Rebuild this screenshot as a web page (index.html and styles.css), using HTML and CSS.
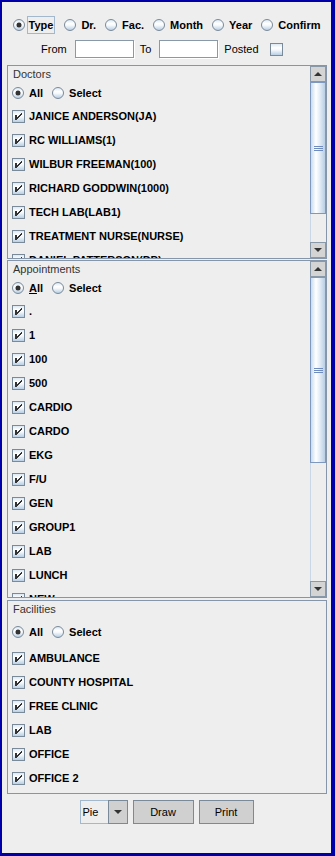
FILE: index.html
```html
<!DOCTYPE html>
<html>

<head>
    <meta charset="utf-8" />
    <title>Appointments chart</title>
    <link rel="stylesheet" href="styles.css">
</head>

<body>
    <div class="window">
        <div class="mode-row">
            <div class="opt"><span class="radio on"></span><span class="focus">Type</span></div>
            <div class="opt"><span class="radio"></span>Dr.</div>
            <div class="opt"><span class="radio"></span>Fac.</div>
            <div class="opt"><span class="radio"></span>Month</div>
            <div class="opt"><span class="radio"></span>Year</div>
            <div class="opt"><span class="radio"></span>Confirm</div>
        </div>

        <div class="range-row">
            <span class="lbl">From</span>
            <span class="field"></span>
            <span class="lbl to-lbl">To</span>
            <span class="field"></span>
            <span class="lbl">Posted</span>
            <span class="check posted-check"></span>
        </div>

        <div class="panel doctors">
            <div class="viewport">
                <div class="panel-title">Doctors</div>
                <div class="choice">
                    <div class="opt"><span class="radio on"></span>All</div>
                    <div class="opt"><span class="radio"></span>Select</div>
                </div>
                <div class="item"><span class="check"><svg width="11" height="11" viewBox="0 0 11 11" shape-rendering="crispEdges"><rect x="2" y="4" width="2" height="5"/><rect x="8" y="2" width="1" height="2"/><rect x="7" y="3" width="1" height="2"/><rect x="6" y="4" width="1" height="2"/><rect x="5" y="5" width="1" height="2"/><rect x="4" y="6" width="1" height="2"/></svg></span>JANICE ANDERSON(JA)</div>
                <div class="item"><span class="check"><svg width="11" height="11" viewBox="0 0 11 11" shape-rendering="crispEdges"><rect x="2" y="4" width="2" height="5"/><rect x="8" y="2" width="1" height="2"/><rect x="7" y="3" width="1" height="2"/><rect x="6" y="4" width="1" height="2"/><rect x="5" y="5" width="1" height="2"/><rect x="4" y="6" width="1" height="2"/></svg></span>RC WILLIAMS(1)</div>
                <div class="item"><span class="check"><svg width="11" height="11" viewBox="0 0 11 11" shape-rendering="crispEdges"><rect x="2" y="4" width="2" height="5"/><rect x="8" y="2" width="1" height="2"/><rect x="7" y="3" width="1" height="2"/><rect x="6" y="4" width="1" height="2"/><rect x="5" y="5" width="1" height="2"/><rect x="4" y="6" width="1" height="2"/></svg></span>WILBUR FREEMAN(100)</div>
                <div class="item"><span class="check"><svg width="11" height="11" viewBox="0 0 11 11" shape-rendering="crispEdges"><rect x="2" y="4" width="2" height="5"/><rect x="8" y="2" width="1" height="2"/><rect x="7" y="3" width="1" height="2"/><rect x="6" y="4" width="1" height="2"/><rect x="5" y="5" width="1" height="2"/><rect x="4" y="6" width="1" height="2"/></svg></span>RICHARD GODDWIN(1000)</div>
                <div class="item"><span class="check"><svg width="11" height="11" viewBox="0 0 11 11" shape-rendering="crispEdges"><rect x="2" y="4" width="2" height="5"/><rect x="8" y="2" width="1" height="2"/><rect x="7" y="3" width="1" height="2"/><rect x="6" y="4" width="1" height="2"/><rect x="5" y="5" width="1" height="2"/><rect x="4" y="6" width="1" height="2"/></svg></span>TECH LAB(LAB1)</div>
                <div class="item"><span class="check"><svg width="11" height="11" viewBox="0 0 11 11" shape-rendering="crispEdges"><rect x="2" y="4" width="2" height="5"/><rect x="8" y="2" width="1" height="2"/><rect x="7" y="3" width="1" height="2"/><rect x="6" y="4" width="1" height="2"/><rect x="5" y="5" width="1" height="2"/><rect x="4" y="6" width="1" height="2"/></svg></span>TREATMENT NURSE(NURSE)</div>
                <div class="item"><span class="check"><svg width="11" height="11" viewBox="0 0 11 11" shape-rendering="crispEdges"><rect x="2" y="4" width="2" height="5"/><rect x="8" y="2" width="1" height="2"/><rect x="7" y="3" width="1" height="2"/><rect x="6" y="4" width="1" height="2"/><rect x="5" y="5" width="1" height="2"/><rect x="4" y="6" width="1" height="2"/></svg></span>DANIEL PATTERSON(DP)</div>
            </div>
            <div class="scrollbar">
                <div class="arrow-btn"><span class="tri-up"></span></div>
                <div class="track"><div class="thumb"><span class="grip"></span></div></div>
                <div class="arrow-btn"><span class="tri-down"></span></div>
            </div>
        </div>

        <div class="panel appointments">
            <div class="viewport">
                <div class="panel-title">Appointments</div>
                <div class="choice">
                    <div class="opt"><span class="radio on"></span><u>A</u>ll</div>
                    <div class="opt"><span class="radio"></span>Select</div>
                </div>
                <div class="item"><span class="check"><svg width="11" height="11" viewBox="0 0 11 11" shape-rendering="crispEdges"><rect x="2" y="4" width="2" height="5"/><rect x="8" y="2" width="1" height="2"/><rect x="7" y="3" width="1" height="2"/><rect x="6" y="4" width="1" height="2"/><rect x="5" y="5" width="1" height="2"/><rect x="4" y="6" width="1" height="2"/></svg></span>.</div>
                <div class="item"><span class="check"><svg width="11" height="11" viewBox="0 0 11 11" shape-rendering="crispEdges"><rect x="2" y="4" width="2" height="5"/><rect x="8" y="2" width="1" height="2"/><rect x="7" y="3" width="1" height="2"/><rect x="6" y="4" width="1" height="2"/><rect x="5" y="5" width="1" height="2"/><rect x="4" y="6" width="1" height="2"/></svg></span>1</div>
                <div class="item"><span class="check"><svg width="11" height="11" viewBox="0 0 11 11" shape-rendering="crispEdges"><rect x="2" y="4" width="2" height="5"/><rect x="8" y="2" width="1" height="2"/><rect x="7" y="3" width="1" height="2"/><rect x="6" y="4" width="1" height="2"/><rect x="5" y="5" width="1" height="2"/><rect x="4" y="6" width="1" height="2"/></svg></span>100</div>
                <div class="item"><span class="check"><svg width="11" height="11" viewBox="0 0 11 11" shape-rendering="crispEdges"><rect x="2" y="4" width="2" height="5"/><rect x="8" y="2" width="1" height="2"/><rect x="7" y="3" width="1" height="2"/><rect x="6" y="4" width="1" height="2"/><rect x="5" y="5" width="1" height="2"/><rect x="4" y="6" width="1" height="2"/></svg></span>500</div>
                <div class="item"><span class="check"><svg width="11" height="11" viewBox="0 0 11 11" shape-rendering="crispEdges"><rect x="2" y="4" width="2" height="5"/><rect x="8" y="2" width="1" height="2"/><rect x="7" y="3" width="1" height="2"/><rect x="6" y="4" width="1" height="2"/><rect x="5" y="5" width="1" height="2"/><rect x="4" y="6" width="1" height="2"/></svg></span>CARDIO</div>
                <div class="item"><span class="check"><svg width="11" height="11" viewBox="0 0 11 11" shape-rendering="crispEdges"><rect x="2" y="4" width="2" height="5"/><rect x="8" y="2" width="1" height="2"/><rect x="7" y="3" width="1" height="2"/><rect x="6" y="4" width="1" height="2"/><rect x="5" y="5" width="1" height="2"/><rect x="4" y="6" width="1" height="2"/></svg></span>CARDO</div>
                <div class="item"><span class="check"><svg width="11" height="11" viewBox="0 0 11 11" shape-rendering="crispEdges"><rect x="2" y="4" width="2" height="5"/><rect x="8" y="2" width="1" height="2"/><rect x="7" y="3" width="1" height="2"/><rect x="6" y="4" width="1" height="2"/><rect x="5" y="5" width="1" height="2"/><rect x="4" y="6" width="1" height="2"/></svg></span>EKG</div>
                <div class="item"><span class="check"><svg width="11" height="11" viewBox="0 0 11 11" shape-rendering="crispEdges"><rect x="2" y="4" width="2" height="5"/><rect x="8" y="2" width="1" height="2"/><rect x="7" y="3" width="1" height="2"/><rect x="6" y="4" width="1" height="2"/><rect x="5" y="5" width="1" height="2"/><rect x="4" y="6" width="1" height="2"/></svg></span>F/U</div>
                <div class="item"><span class="check"><svg width="11" height="11" viewBox="0 0 11 11" shape-rendering="crispEdges"><rect x="2" y="4" width="2" height="5"/><rect x="8" y="2" width="1" height="2"/><rect x="7" y="3" width="1" height="2"/><rect x="6" y="4" width="1" height="2"/><rect x="5" y="5" width="1" height="2"/><rect x="4" y="6" width="1" height="2"/></svg></span>GEN</div>
                <div class="item"><span class="check"><svg width="11" height="11" viewBox="0 0 11 11" shape-rendering="crispEdges"><rect x="2" y="4" width="2" height="5"/><rect x="8" y="2" width="1" height="2"/><rect x="7" y="3" width="1" height="2"/><rect x="6" y="4" width="1" height="2"/><rect x="5" y="5" width="1" height="2"/><rect x="4" y="6" width="1" height="2"/></svg></span>GROUP1</div>
                <div class="item"><span class="check"><svg width="11" height="11" viewBox="0 0 11 11" shape-rendering="crispEdges"><rect x="2" y="4" width="2" height="5"/><rect x="8" y="2" width="1" height="2"/><rect x="7" y="3" width="1" height="2"/><rect x="6" y="4" width="1" height="2"/><rect x="5" y="5" width="1" height="2"/><rect x="4" y="6" width="1" height="2"/></svg></span>LAB</div>
                <div class="item"><span class="check"><svg width="11" height="11" viewBox="0 0 11 11" shape-rendering="crispEdges"><rect x="2" y="4" width="2" height="5"/><rect x="8" y="2" width="1" height="2"/><rect x="7" y="3" width="1" height="2"/><rect x="6" y="4" width="1" height="2"/><rect x="5" y="5" width="1" height="2"/><rect x="4" y="6" width="1" height="2"/></svg></span>LUNCH</div>
                <div class="item"><span class="check"><svg width="11" height="11" viewBox="0 0 11 11" shape-rendering="crispEdges"><rect x="2" y="4" width="2" height="5"/><rect x="8" y="2" width="1" height="2"/><rect x="7" y="3" width="1" height="2"/><rect x="6" y="4" width="1" height="2"/><rect x="5" y="5" width="1" height="2"/><rect x="4" y="6" width="1" height="2"/></svg></span>NEW</div>
            </div>
            <div class="scrollbar">
                <div class="arrow-btn"><span class="tri-up"></span></div>
                <div class="track"><div class="thumb"><span class="grip"></span></div></div>
                <div class="arrow-btn"><span class="tri-down"></span></div>
            </div>
        </div>

        <div class="panel facilities">
            <div class="viewport">
                <div class="panel-title">Facilities</div>
                <div class="choice">
                    <div class="opt"><span class="radio on"></span>All</div>
                    <div class="opt"><span class="radio"></span>Select</div>
                </div>
                <div class="item"><span class="check"><svg width="11" height="11" viewBox="0 0 11 11" shape-rendering="crispEdges"><rect x="2" y="4" width="2" height="5"/><rect x="8" y="2" width="1" height="2"/><rect x="7" y="3" width="1" height="2"/><rect x="6" y="4" width="1" height="2"/><rect x="5" y="5" width="1" height="2"/><rect x="4" y="6" width="1" height="2"/></svg></span>AMBULANCE</div>
                <div class="item"><span class="check"><svg width="11" height="11" viewBox="0 0 11 11" shape-rendering="crispEdges"><rect x="2" y="4" width="2" height="5"/><rect x="8" y="2" width="1" height="2"/><rect x="7" y="3" width="1" height="2"/><rect x="6" y="4" width="1" height="2"/><rect x="5" y="5" width="1" height="2"/><rect x="4" y="6" width="1" height="2"/></svg></span>COUNTY HOSPITAL</div>
                <div class="item"><span class="check"><svg width="11" height="11" viewBox="0 0 11 11" shape-rendering="crispEdges"><rect x="2" y="4" width="2" height="5"/><rect x="8" y="2" width="1" height="2"/><rect x="7" y="3" width="1" height="2"/><rect x="6" y="4" width="1" height="2"/><rect x="5" y="5" width="1" height="2"/><rect x="4" y="6" width="1" height="2"/></svg></span>FREE CLINIC</div>
                <div class="item"><span class="check"><svg width="11" height="11" viewBox="0 0 11 11" shape-rendering="crispEdges"><rect x="2" y="4" width="2" height="5"/><rect x="8" y="2" width="1" height="2"/><rect x="7" y="3" width="1" height="2"/><rect x="6" y="4" width="1" height="2"/><rect x="5" y="5" width="1" height="2"/><rect x="4" y="6" width="1" height="2"/></svg></span>LAB</div>
                <div class="item"><span class="check"><svg width="11" height="11" viewBox="0 0 11 11" shape-rendering="crispEdges"><rect x="2" y="4" width="2" height="5"/><rect x="8" y="2" width="1" height="2"/><rect x="7" y="3" width="1" height="2"/><rect x="6" y="4" width="1" height="2"/><rect x="5" y="5" width="1" height="2"/><rect x="4" y="6" width="1" height="2"/></svg></span>OFFICE</div>
                <div class="item"><span class="check"><svg width="11" height="11" viewBox="0 0 11 11" shape-rendering="crispEdges"><rect x="2" y="4" width="2" height="5"/><rect x="8" y="2" width="1" height="2"/><rect x="7" y="3" width="1" height="2"/><rect x="6" y="4" width="1" height="2"/><rect x="5" y="5" width="1" height="2"/><rect x="4" y="6" width="1" height="2"/></svg></span>OFFICE 2</div>
            </div>
        </div>

        <div class="button-row">
            <div class="combo">
                <span class="combo-value">Pie</span>
                <span class="combo-arrow"><span class="tri-down"></span></span>
            </div>
            <div class="btn draw-btn">Draw</div>
            <div class="btn print-btn">Print</div>
        </div>
    </div>
</body>

</html>
```

FILE: styles.css
```css
* {
    box-sizing: border-box;
}

body {
    margin: 0;
    background: #0000a8;
    font-family: "Liberation Sans", Arial, sans-serif;
    font-size: 11px;
    color: #000;
}

.window {
    width: 335px;
    height: 856px;
    border-style: solid;
    border-color: #0000a8;
    border-width: 2px 4px 3px 2px;
    background: #eeeeee;
    padding-top: 14px;
}

/* radio buttons and checkboxes, metal style */
.radio {
    flex: none;
    position: relative;
    width: 12px;
    height: 12px;
    margin-right: 5px;
    border: 1px solid #7a8a99;
    border-radius: 50%;
    background: linear-gradient(#dde8f3 0%, #ffffff 35%, #f4f8fb 55%, #b8cfe5 100%);
}

.radio.on::after {
    content: "";
    position: absolute;
    left: 3px;
    top: 3px;
    width: 4px;
    height: 4px;
    border-radius: 50%;
    background: #333;
    box-shadow: 0 0 0 0.5px #333;
}

.check {
    flex: none;
    width: 13px;
    height: 13px;
    margin-right: 4px;
    border: 1px solid #7a8a99;
    background: linear-gradient(#dde8f3 0%, #ffffff 35%, #f4f8fb 55%, #b8cfe5 100%);
}

.check svg {
    display: block;
    fill: #333;
}

.opt {
    display: flex;
    align-items: center;
    font-weight: bold;
    white-space: nowrap;
}

/* top rows */
.mode-row {
    height: 18px;
    display: flex;
    align-items: center;
    justify-content: center;
    gap: 9px;
}

.mode-row .radio.on {
    margin-right: 2px;
}

.focus {
    height: 18px;
    line-height: 16px;
    padding: 0 1px;
    border: 1px solid #a3b8cc;
}

.range-row {
    height: 18px;
    margin-top: 6px;
    padding-left: 39px;
    display: flex;
    align-items: center;
}

.field {
    width: 59px;
    height: 18px;
    margin: 0 6px 0 8px;
    background: #fff;
    border: 1px solid #8a99a8;
    box-shadow: 1px 1px 0 #fff;
}

.to-lbl + .field {
    margin-left: 8px;
}

.posted-check {
    margin-left: 11px;
}

/* list panels */
.panel {
    display: flex;
    width: 320px;
    margin-left: 5px;
    border: 1px solid #8596aa;
    overflow: hidden;
}

.doctors {
    height: 194px;
    margin-top: 7px;
}

.appointments {
    height: 338px;
    margin-top: 1px;
}

.facilities {
    height: 194px;
    margin-top: 2px;
}

.viewport {
    flex: 1;
    min-width: 0;
    overflow: hidden;
}

.panel-title {
    height: 16px;
    line-height: 16px;
    padding-left: 5px;
    color: #333;
}

.choice {
    height: 22px;
    padding-left: 4px;
    display: flex;
    align-items: center;
    gap: 9px;
}

.facilities .choice {
    height: 29px;
}

.item {
    height: 24px;
    padding-left: 4px;
    display: flex;
    align-items: center;
    font-weight: bold;
    white-space: nowrap;
}

/* scrollbar */
.scrollbar {
    flex: none;
    width: 16px;
    display: flex;
    flex-direction: column;
}

.arrow-btn {
    height: 16px;
    flex: none;
    display: flex;
    align-items: center;
    justify-content: center;
    background: #d4d4d4;
    border: 1px solid #8a99aa;
}

.tri-up,
.tri-down {
    width: 0;
    height: 0;
    border-left: 4px solid transparent;
    border-right: 4px solid transparent;
}

.tri-up {
    border-bottom: 4px solid #333;
}

.tri-down {
    border-top: 4px solid #333;
}

.track {
    flex: 1;
    background: #eeeeee;
    border-left: 1px solid #c8d6e6;
}

.thumb {
    margin-left: -1px;
    display: flex;
    align-items: center;
    justify-content: center;
    border: 1px solid #7f98c0;
    background: linear-gradient(to right, #c8dbef 0%, #ffffff 35%, #e6eef7 60%, #b8cfe5 100%);
}

.doctors .thumb {
    height: 132px;
}

.appointments .thumb {
    height: 186px;
}

.grip {
    width: 9px;
    height: 5px;
    background: repeating-linear-gradient(#6f8bbd 0 1px, transparent 1px 2px);
}

/* bottom buttons */
.button-row {
    height: 24px;
    margin-top: 6px;
    display: flex;
    justify-content: center;
    gap: 5px;
}

.combo {
    display: flex;
}

.combo-value {
    width: 28px;
    padding-left: 2px;
    line-height: 22px;
    border: 1px solid #a3b8cc;
    border-right: none;
    background: #eeeeee;
}

.combo-arrow {
    width: 20px;
    display: flex;
    align-items: center;
    justify-content: center;
    background: #d0d0d0;
    border: 1px solid #7a8a99;
}

.btn {
    line-height: 22px;
    text-align: center;
    background: #d0d0d0;
    border: 1px solid #7a8a99;
}

.draw-btn {
    width: 61px;
}

.print-btn {
    width: 55px;
}
```
